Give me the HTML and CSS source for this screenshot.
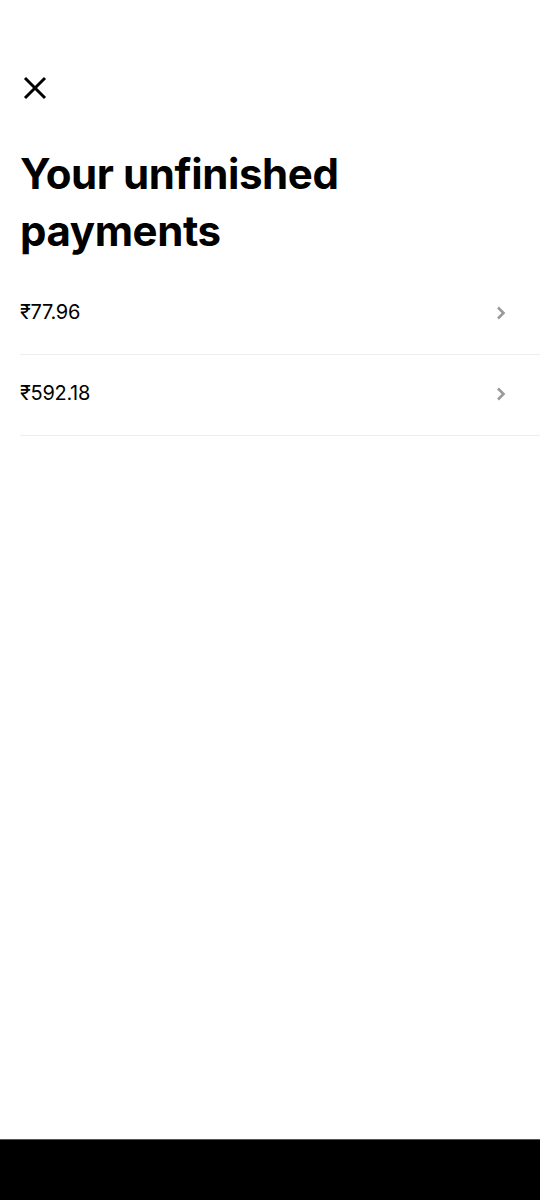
FILE: index.html
```html
<html>
<head>
<meta content="text/html;charset=utf-8" http-equiv="Content-Type" />
<link rel="stylesheet" href="styles.css">
</head>
<body>
<div class="screen">
	<div class="topbar">
		<button class="close" aria-label="Close">
			<svg width="24" height="24" viewBox="0 0 24 24"><path d="M2 2 L22 22 M22 2 L2 22" stroke="#000" stroke-width="3" fill="none"/></svg>
		</button>
	</div>
	<h1 class="title">Your unfinished payments</h1>
	<div class="list">
		<div class="row">
			<span class="amount">₹77.96</span>
			<svg class="chev" width="10" height="14" viewBox="0 0 10 14"><path d="M2 1.5 L7.5 7 L2 12.5" stroke="#9a9a9a" stroke-width="2.6" fill="none"/></svg>
		</div>
		<div class="row">
			<span class="amount">₹592.18</span>
			<svg class="chev" width="10" height="14" viewBox="0 0 10 14"><path d="M2 1.5 L7.5 7 L2 12.5" stroke="#9a9a9a" stroke-width="2.6" fill="none"/></svg>
		</div>
	</div>
</div>
<div class="navbar"></div>
</body>
</html>
```

FILE: styles.css
```css
body {
	margin:0;
	padding:0;
	background:#fff;
	color:#000;
	font-family: Inter, "Noto Sans", sans-serif;
	width:540px;
	height:1200px;
	display:flex;
	flex-direction:column;
	overflow:hidden;
}

.screen {
	flex:1;
	padding-left:20px;
}

.topbar {
	height:120px;
	display:flex;
	align-items:flex-start;
	padding-top:76px;
	box-sizing:border-box;
}

.close {
	border:0;
	background:none;
	padding:0;
	margin-left:3px;
	width:24px;
	height:24px;
	display:block;
}

.title {
	margin:25px 0 0 0;
	width:340px;
	font-size:42px;
	line-height:57px;
	font-weight:700;
	letter-spacing:-0.4px;
}

.list {
	margin-top:15px;
}

.row {
	height:81px;
	box-sizing:border-box;
	padding-bottom:4px;
	display:flex;
	align-items:center;
	justify-content:space-between;
	border-bottom:1px solid #eeeeee;
	padding-right:34px;
}

.amount {
	font-size:20px;
	letter-spacing:-0.3px;
}

.chev {
	display:block;
	margin-top:2px;
}

.navbar {
	height:60px;
	background:#000;
	border-top:1px solid #555;
}
```
